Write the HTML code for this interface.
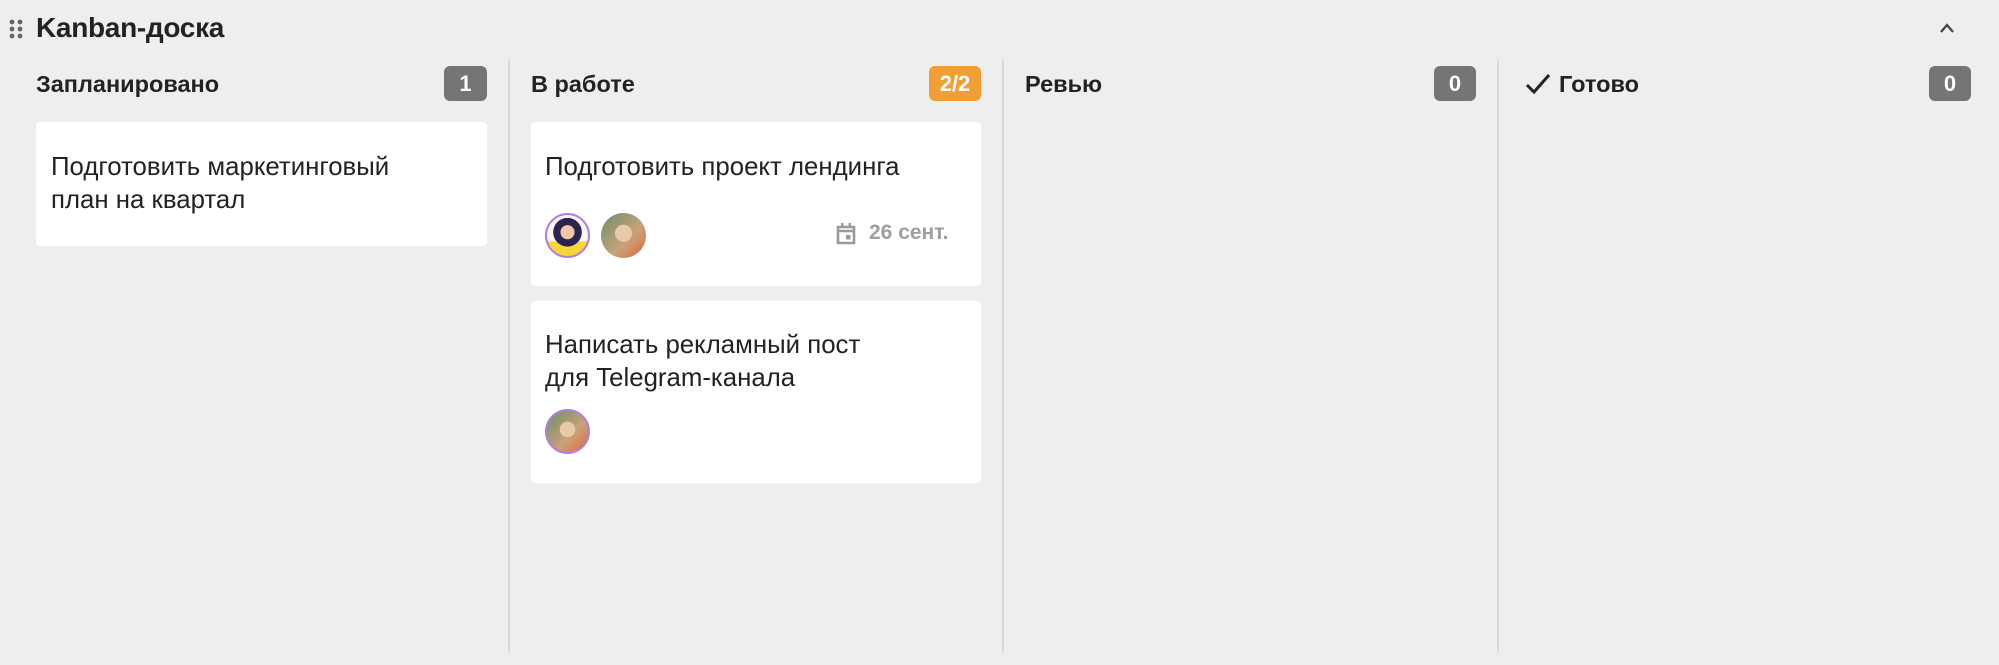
<!DOCTYPE html>
<html><head><meta charset="utf-8"><style>
*{margin:0;padding:0;box-sizing:border-box}
body{width:1999px;height:665px;background:#edeef0;font-family:"Liberation Sans",sans-serif;color:#222;position:relative;overflow:hidden}
.abs{position:absolute}
.title{left:36px;top:11px;font-size:28px;line-height:34px;color:#222;font-weight:bold;letter-spacing:-0.3px}
.div{width:2px;background:#d8d9db;top:59px;height:594px}
.h{font-size:23.5px;font-weight:bold;top:70px;line-height:28px;color:#222}
.badge{top:66px;height:35px;border-radius:6px;background:#757575;color:#fff;font-size:22px;line-height:35px;text-align:center;font-weight:bold}
.card{background:#fff;border-radius:4px}
.ct{font-size:25.8px;line-height:33px;color:#222}
.av{width:45px;height:45px;border-radius:50%}
</style></head><body>
<svg class="abs" style="left:9px;top:19px" width="14" height="20" viewBox="0 0 14 20"><g fill="#666"><circle cx="3" cy="3" r="2.4"/><circle cx="11" cy="3" r="2.4"/><circle cx="3" cy="10" r="2.4"/><circle cx="11" cy="10" r="2.4"/><circle cx="3" cy="17" r="2.4"/><circle cx="11" cy="17" r="2.4"/></g></svg>
<div class="abs title">Kanban-доска</div>
<svg class="abs" style="left:1938px;top:22px" width="18" height="12" viewBox="0 0 18 12"><path d="M3 10 L9 3 L15 10" fill="none" stroke="#444" stroke-width="2.2"/></svg>

<div class="abs div" style="left:508px"></div>
<div class="abs div" style="left:1002px"></div>
<div class="abs div" style="left:1497px"></div>

<div class="abs h" style="left:36px">Запланировано</div>
<div class="abs badge" style="left:444px;width:43px">1</div>
<div class="abs h" style="left:531px">В работе</div>
<div class="abs badge" style="left:929px;width:52px;background:#f19f35">2/2</div>
<div class="abs h" style="left:1025px">Ревью</div>
<div class="abs badge" style="left:1434px;width:42px">0</div>
<svg class="abs" style="left:1525px;top:72px" width="26" height="24" viewBox="0 0 26 24"><path d="M2 13 L9 20 L24 3" fill="none" stroke="#222" stroke-width="3"/></svg>
<div class="abs h" style="left:1559px">Готово</div>
<div class="abs badge" style="left:1929px;width:42px">0</div>

<div class="abs card" style="left:36px;top:122px;width:451px;height:124px"></div>
<div class="abs ct" style="left:51px;top:151px">Подготовить маркетинговый<br>план на квартал</div>

<div class="abs card" style="left:531px;top:122px;width:450px;height:164px"></div>
<div class="abs ct" style="left:545px;top:151px">Подготовить проект лендинга</div>
<div class="abs av" style="left:545px;top:213px;border:2px solid #b57edc;background:radial-gradient(circle at 50% 42%,#f3c6a8 0 22%,#2d2250 23% 45%,transparent 46%),linear-gradient(#f7f7f7 65%,#f4d63a 65%)"></div>
<div class="abs av" style="left:601px;top:213px;background:radial-gradient(circle at 50% 45%,#e9c9a8 0 25%,transparent 26%),linear-gradient(135deg,#6b8f6a,#c9a27a 60%,#e0653a)"></div>
<svg class="abs" style="left:836px;top:222px" width="20" height="23" viewBox="0 0 20 23"><path d="M2 5 h16 v16 h-16 z M2 5 v4 h16" fill="none" stroke="#9a9a9a" stroke-width="2.6"/><rect x="5" y="1" width="2.4" height="5" fill="#9a9a9a"/><rect x="12.6" y="1" width="2.4" height="5" fill="#9a9a9a"/><rect x="10" y="13" width="4.5" height="4.5" fill="#9a9a9a"/></svg>
<div class="abs" style="left:869px;top:221px;font-size:21px;line-height:24px;color:#9e9e9e;font-weight:bold">26 сент.</div>

<div class="abs card" style="left:531px;top:301px;width:450px;height:182px"></div>
<div class="abs ct" style="left:545px;top:329px">Написать рекламный пост<br>для Telegram-канала</div>
<div class="abs av" style="left:545px;top:409px;border:2px solid #b57edc;background:radial-gradient(circle at 50% 45%,#e9c9a8 0 25%,transparent 26%),linear-gradient(135deg,#6b8f6a,#c9a27a 60%,#e0653a)"></div>
</body></html>
